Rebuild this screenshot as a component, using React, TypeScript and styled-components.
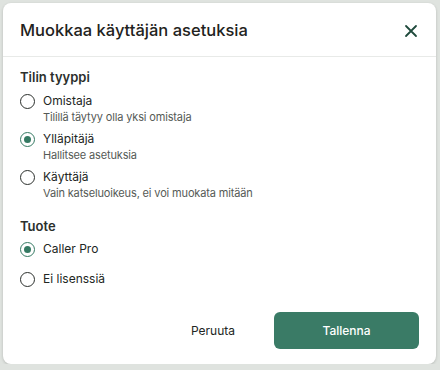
import React, { useState } from 'react'
import styled, { createGlobalStyle } from 'styled-components'

const GlobalStyle = createGlobalStyle`
  html, body {
    margin: 0;
    padding: 0;
    background: #dfe3df;
    font-family: Inter, "Noto Sans", sans-serif;
  }
`

const Page = styled.div`
  padding: 3px 4px 0 3px;
`

const Dialog = styled.div`
  width: 433px;
  height: 361px;
  background: #fff;
  border-radius: 8px;
  box-shadow: 0 1px 3px rgba(0, 0, 0, 0.18);
  display: flex;
  flex-direction: column;
  box-sizing: border-box;
`

const Header = styled.div`
  height: 54px;
  display: flex;
  align-items: center;
  justify-content: space-between;
  padding: 0 18px 0 17px;
  border-bottom: 1px solid #e8eae8;
  box-sizing: border-box;
`

const Title = styled.h2`
  margin: 0;
  font-size: 16.5px;
  font-weight: 500;
  color: #1f2320;
`

const CloseButton = styled.button`
  border: 0;
  background: none;
  padding: 0;
  width: 14px;
  height: 14px;
  display: flex;
  margin-top: 2px;
  cursor: pointer;
`

const Body = styled.div`
  padding: 12px 17px 0 17px;
  flex: 1;
`

const Section = styled.div<{ $gap: number }>`
  display: flex;
  flex-direction: column;
  gap: ${p => p.$gap}px;
  margin-bottom: 17px;
`

const SectionLabel = styled.div<{ $after: number }>`
  font-size: 13px;
  font-weight: 600;
  color: #2b2f2c;
  line-height: 16px;
  margin-bottom: ${p => p.$after}px;
`

const OptionRow = styled.label`
  display: flex;
  align-items: flex-start;
  gap: 8px;
  cursor: pointer;
`

const Circle = styled.span<{ $checked: boolean }>`
  width: 15px;
  height: 15px;
  box-sizing: border-box;
  border-radius: 50%;
  border: 1.5px solid ${p => (p.$checked ? '#357a63' : '#2b2f2c')};
  display: flex;
  align-items: center;
  justify-content: center;
  flex-shrink: 0;
  margin-top: 0.5px;

  &::after {
    content: '';
    width: 7px;
    height: 7px;
    border-radius: 50%;
    background: #357a63;
    display: ${p => (p.$checked ? 'block' : 'none')};
  }
`

const OptionText = styled.div`
  display: flex;
  flex-direction: column;
`

const OptionTitle = styled.span`
  font-size: 12px;
  line-height: 16px;
  color: #222623;
`

const OptionSub = styled.span`
  font-size: 11px;
  line-height: 16px;
  letter-spacing: -0.15px;
  color: #555a56;
`

const Footer = styled.div`
  display: flex;
  justify-content: flex-end;
  align-items: center;
  gap: 18px;
  padding: 0 17px 15px 17px;
`

const GhostButton = styled.button`
  border: 0;
  background: none;
  font-family: inherit;
  font-size: 12px;
  color: #222623;
  height: 37px;
  padding: 0 21px;
  cursor: pointer;
`

const PrimaryButton = styled.button`
  border: 0;
  width: 145px;
  height: 37px;
  border-radius: 6px;
  background: #3a7b66;
  color: #fff;
  font-family: inherit;
  font-size: 12px;
  font-weight: 500;
  cursor: pointer;
`

type Opt = { id: string; title: string; sub?: string }

const accountTypes: Opt[] = [
  { id: 'owner', title: 'Omistaja', sub: 'Tilillä täytyy olla yksi omistaja' },
  { id: 'admin', title: 'Ylläpitäjä', sub: 'Hallitsee asetuksia' },
  { id: 'user', title: 'Käyttäjä', sub: 'Vain katseluoikeus, ei voi muokata mitään' },
]

const products: Opt[] = [
  { id: 'pro', title: 'Caller Pro' },
  { id: 'none', title: 'Ei lisenssiä' },
]

const RadioGroup = ({ options, value, onChange }: { options: Opt[]; value: string; onChange: (v: string) => void }) => (
  <>
    {options.map(o => (
      <OptionRow key={o.id} onClick={() => onChange(o.id)}>
        <Circle $checked={value === o.id} />
        <OptionText>
          <OptionTitle>{o.title}</OptionTitle>
          {o.sub && <OptionSub>{o.sub}</OptionSub>}
        </OptionText>
      </OptionRow>
    ))}
  </>
)

export default function App() {
  const [type, setType] = useState('admin')
  const [product, setProduct] = useState('pro')

  return (
    <Page>
      <GlobalStyle />
      <Dialog>
        <Header>
          <Title>Muokkaa käyttäjän asetuksia</Title>
          <CloseButton aria-label="Sulje">
            <svg width="14" height="14" viewBox="0 0 14 14">
              <path d="M2 2L12 12M12 2L2 12" stroke="#1f4a3c" strokeWidth="1.8" strokeLinecap="round" />
            </svg>
          </CloseButton>
        </Header>
        <Body>
          <Section $gap={6}>
            <SectionLabel $after={2}>Tilin tyyppi</SectionLabel>
            <RadioGroup options={accountTypes} value={type} onChange={setType} />
          </Section>
          <Section $gap={14}>
            <SectionLabel $after={-7}>Tuote</SectionLabel>
            <RadioGroup options={products} value={product} onChange={setProduct} />
          </Section>
        </Body>
        <Footer>
          <GhostButton>Peruuta</GhostButton>
          <PrimaryButton>Tallenna</PrimaryButton>
        </Footer>
      </Dialog>
    </Page>
  )
}
